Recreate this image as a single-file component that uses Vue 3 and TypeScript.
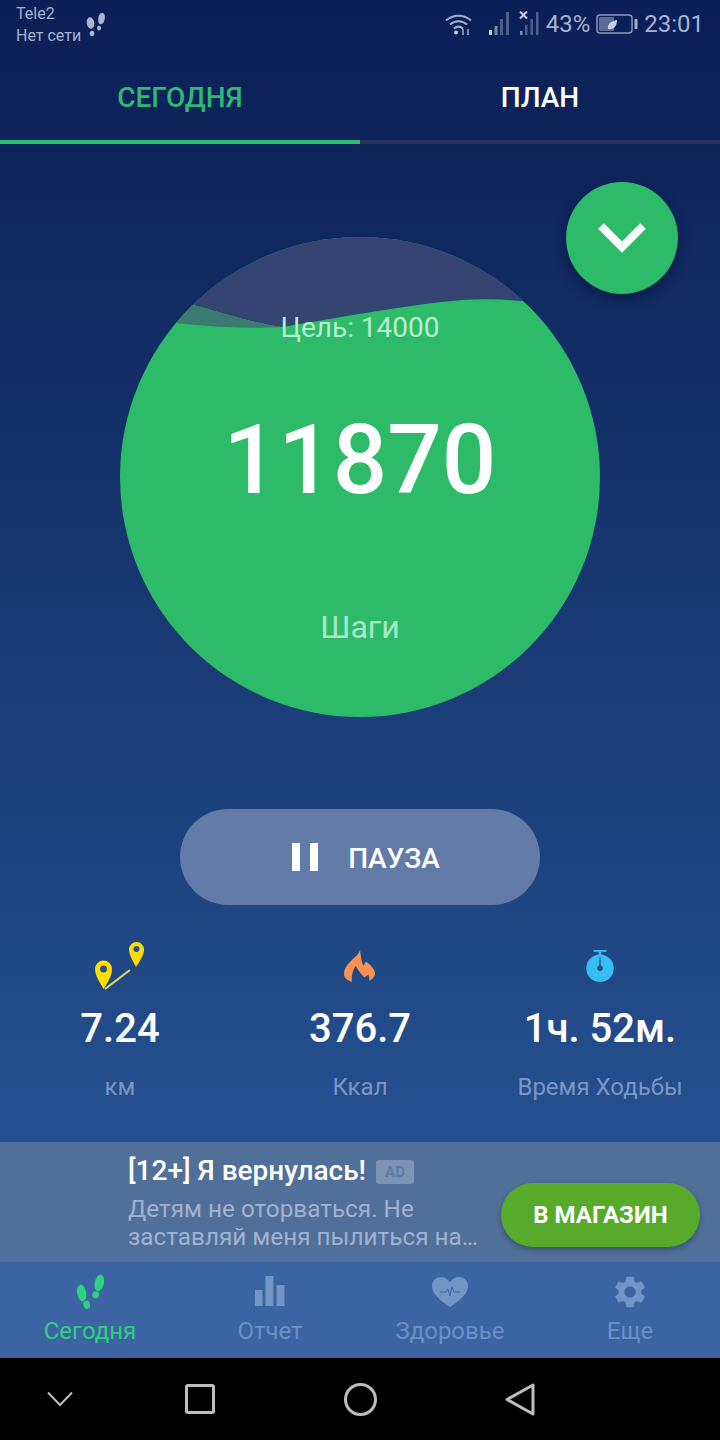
<script setup lang="ts">
interface Stat { value: string; label: string; icon: string }
const stats: Stat[] = [
  { value: '7.24', label: 'км', icon: 'route' },
  { value: '376.7', label: 'Ккал', icon: 'fire' },
  { value: '1ч. 52м.', label: 'Время Ходьбы', icon: 'timer' },
]
const navItems = [
  { label: 'Сегодня', icon: 'steps', active: true },
  { label: 'Отчет', icon: 'bars', active: false },
  { label: 'Здоровье', icon: 'heart', active: false },
  { label: 'Еще', icon: 'gear', active: false },
]
</script>

<template>
  <div class="screen">
    <div class="gradient">
      <header class="status">
        <div class="carrier">
          <div>Tele2</div>
          <div>Нет сети</div>
        </div>
        <svg class="st-steps" width="22" height="26" viewBox="0 0 22 26" fill="#a9b5cd">
          <ellipse cx="5.500" cy="11" rx="3.800" ry="5.800" transform="rotate(-10 5.500 11)" />
          <ellipse cx="7" cy="21.500" rx="2.300" ry="2.800" />
          <ellipse cx="16.500" cy="6.500" rx="3.300" ry="5.800" transform="rotate(10 16.500 6.500)" />
          <ellipse cx="14" cy="16" rx="2" ry="2.500" />
        </svg>
        <div class="st-right">
          <svg width="30" height="24" viewBox="0 0 30 24" fill="none" stroke="#a3b0ca" stroke-width="2">
            <path d="M2 8.500C9 2 20 2 27 8.500" />
            <path d="M6 12.500C11 8 18 8 23 12.500" />
            <path d="M10 16.500C13 14 16 14 19 16.500" />
            <circle cx="12" cy="20.500" r="2" fill="#c4cddf" stroke="none" />
            <path d="M19 23v-6M24 17v6" stroke-width="1.500" />
          </svg>
          <svg class="sig1" width="24" height="24" viewBox="0 0 24 24">
            <rect x="1" y="19" width="3" height="5" fill="#c4cddf" />
            <rect x="6.500" y="15" width="3" height="9" fill="#7f8dac" />
            <rect x="12" y="8" width="3" height="16" fill="#4c5f88" />
            <rect x="18" y="1" width="3" height="23" fill="#4c5f88" />
          </svg>
          <svg class="sig2" width="24" height="24" viewBox="0 0 24 24">
            <path d="M1 0.500l7 7M8 0.500l-7 7" stroke="#c4cddf" stroke-width="2" />
            <rect x="1" y="20" width="2.500" height="4" fill="#7f8dac" />
            <rect x="6" y="14" width="2.500" height="10" fill="#4c5f88" />
            <rect x="11.500" y="8" width="2.500" height="16" fill="#4c5f88" />
            <rect x="17" y="1" width="2.500" height="23" fill="#4c5f88" />
          </svg>
          <span class="pct">43%</span>
          <svg class="batt" width="42" height="22" viewBox="0 0 42 22">
            <rect x="1" y="2" width="35" height="18" rx="3" fill="none" stroke="#8b99b8" stroke-width="1.500" />
            <rect x="3" y="4" width="15" height="14" rx="1" fill="#5a6c94" />
            <path d="M12 16c-1-5 3-8 9-9 0 6-3 10-9 9z" fill="#c8d0e0" />
            <rect x="38.500" y="6" width="3" height="10" rx="1" fill="#a3b0ca" />
          </svg>
          <span class="time">23:01</span>
        </div>
      </header>

      <nav class="tabs">
        <div class="tab tab-on">СЕГОДНЯ</div>
        <div class="tab">ПЛАН</div>
      </nav>
      <div class="track"><div class="track-fill"></div></div>

      <main class="main">
        <div class="stage">
          <div class="circle">
            <svg class="wave" viewBox="0 0 480 480" width="480" height="480">
              <rect width="480" height="480" fill="#2ebb69" />
              <path d="M0 0H480V66L400 64C370 61 345 62 321 65C270 71 215 81 163 90C130 86 100 75 73 68L0 50Z" fill="#32446f" />
              <path d="M73 68C100 75 130 86 163 90C130 92 90 90 56 86L40 80Z" fill="#3a7a70" />
            </svg>
            <div class="goal">Цель: 14000</div>
            <div class="count">11870</div>
            <div class="unit">Шаги</div>
          </div>
          <div class="fab">
            <svg width="48" height="30" viewBox="0 0 48 30" fill="none" stroke="#fff" stroke-width="8">
              <path d="M3 3L24 24L45 3" />
            </svg>
          </div>
        </div>

        <div class="pause">
          <div class="pause-inner">
            <svg class="pause-ic" width="26" height="28" viewBox="0 0 26 28" fill="#fff">
              <rect x="0" y="0" width="8" height="28" />
              <rect x="18" y="0" width="8" height="28" />
            </svg>
            <span class="pause-txt">ПАУЗА</span>
          </div>
        </div>

        <section class="stats">
          <div v-for="s in stats" :key="s.label" class="stat">
            <div class="stat-ic">
              <svg v-if="s.icon === 'route'" width="52" height="50" viewBox="0 0 52 50">
                <path d="M9.500 48C6 41 1 35 1 28a8.500 8.500 0 0 1 17 0c0 7-4 13-8.500 20z" fill="#ffdd00" />
                <circle cx="9.500" cy="28" r="3.500" fill="#27508c" />
                <path d="M42 26C39 20 35 14 35 8.500a7.500 7.500 0 0 1 15 0C50 14 46 20 42 26z" fill="#ffdd00" />
                <circle cx="42.500" cy="8" r="3" fill="#27508c" />
                <path d="M11 48L36 29" stroke="#e7db58" stroke-width="2" />
              </svg>
              <svg v-else-if="s.icon === 'fire'" width="32" height="33" viewBox="0 0 32 33">
                <path d="M16 0C17 5 17 11 19.300 15.700L22 11.300C26 15 31 19 31 23C31 27 28 29 25.300 31C25.500 28 25 26 24.300 24.700L20.300 27.300C17 24 14 20 11.700 15.700C9 20 7 26 8 32C3 30 0 28 0 24C0 18 4 14 8 10C11 7 15 4 16 0Z" fill="#f79255" />
              </svg>
              <svg v-else width="30" height="33" viewBox="0 0 30 36">
                <rect x="8" y="0" width="14" height="2" fill="#35bdf4" />
                <rect x="13.500" y="2" width="3" height="4" fill="#35bdf4" />
                <circle cx="15" cy="20" r="15" fill="#35bdf4" />
                <circle cx="15" cy="20" r="3" fill="#1f4b86" />
                <rect x="14.300" y="8" width="1.400" height="11" fill="#1f4b86" />
              </svg>
            </div>
            <div class="stat-val">{{ s.value }}</div>
            <div class="stat-lbl">{{ s.label }}</div>
          </div>
        </section>
      </main>
    </div>

    <aside class="ad">
      <div class="ad-text">
        <div class="ad-title">[12+] Я вернулась!<span class="ad-tag">AD</span></div>
        <div class="ad-sub">Детям не оторваться. Не<br />заставляй меня пылиться на…</div>
      </div>
      <div class="ad-btn">В МАГАЗИН</div>
    </aside>

    <nav class="bottom">
      <div v-for="n in navItems" :key="n.label" class="nav-item" :class="{ on: n.active }">
        <svg v-if="n.icon === 'steps'" width="30" height="38" viewBox="0 0 30 38" fill="#2fd27c">
          <ellipse cx="6.700" cy="20" rx="4.500" ry="8.500" transform="rotate(-10 6.700 20)" />
          <ellipse cx="11.700" cy="31.700" rx="3.300" ry="4.200" transform="rotate(-15 11.700 31.700)" />
          <ellipse cx="24.300" cy="10" rx="4.600" ry="8.500" transform="rotate(12 24.300 10)" />
          <ellipse cx="20.700" cy="21.700" rx="3.300" ry="3.500" />
        </svg>
        <svg v-else-if="n.icon === 'bars'" width="30" height="38" viewBox="0 -3 30 38" fill="#7294c6">
          <rect x="0" y="14" width="7.500" height="16" />
          <rect x="10.500" y="0" width="8" height="30" />
          <rect x="21.500" y="9" width="8" height="21" />
        </svg>
        <svg v-else-if="n.icon === 'heart'" width="36" height="38" viewBox="0 -4 36 38">
          <path d="M18 30C8 23 0 17 0 9 0 3 5 0 9 0c4 0 7 2 9 5 2-3 5-5 9-5 4 0 9 3 9 9 0 8-8 14-18 21z" fill="#7294c6" />
          <path d="M8 15h6l2-3 2 7 2-9 2 5h6" fill="none" stroke="#3d65a3" stroke-width="1" />
        </svg>
        <svg v-else width="30" height="38" viewBox="2.500 0 19 24" fill="#7294c6">
          <path d="M19.140 12.940c.040-.300.060-.610.060-.940 0-.320-.020-.640-.070-.940l2.030-1.580a.490.490 0 0 0 .120-.610l-1.920-3.320a.490.490 0 0 0-.590-.220l-2.390.960c-.500-.380-1.030-.700-1.620-.940l-.360-2.540a.480.480 0 0 0-.480-.410h-3.840a.470.470 0 0 0-.470.410l-.360 2.540c-.590.240-1.130.570-1.620.940l-2.390-.960a.480.480 0 0 0-.590.220L2.740 8.870a.470.470 0 0 0 .120.610l2.030 1.580c-.050.300-.090.630-.090.940s.020.640.070.940l-2.030 1.580a.490.490 0 0 0-.120.610l1.920 3.320c.120.220.370.290.590.220l2.390-.960c.500.380 1.030.700 1.620.940l.360 2.540c.050.240.240.410.480.410h3.840c.240 0 .440-.170.470-.410l.360-2.540c.590-.240 1.130-.560 1.620-.940l2.390.960c.220.080.470 0 .590-.220l1.920-3.320a.470.470 0 0 0-.120-.610l-2.010-1.580zM12 15.600A3.600 3.600 0 1 1 12 8.400a3.600 3.600 0 0 1 0 7.200z" />
        </svg>
        <span>{{ n.label }}</span>
      </div>
    </nav>

    <footer class="sysbar">
      <svg width="26" height="16" viewBox="0 0 26 16" fill="none" stroke="#bdbdbd" stroke-width="2">
        <path d="M1 1.500L13 14L25 1.500" />
      </svg>
      <svg width="30" height="30" viewBox="0 0 30 30" fill="none" stroke="#bdbdbd" stroke-width="3">
        <rect x="1.500" y="1.500" width="27" height="27" rx="1.500" />
      </svg>
      <svg width="33" height="33" viewBox="0 0 33 33" fill="none" stroke="#bdbdbd" stroke-width="3">
        <circle cx="16.500" cy="16.500" r="15" />
      </svg>
      <svg width="30" height="33" viewBox="0 0 30 33" fill="none" stroke="#bdbdbd" stroke-width="3" stroke-linejoin="round">
        <path d="M28 2V31L2 16.500Z" />
      </svg>
    </footer>
  </div>
</template>

<style>
html, body { margin: 0; padding: 0; background: #000; }
</style>

<style scoped>
.screen {
  width: 720px;
  height: 1440px;
  display: flex;
  flex-direction: column;
  overflow: hidden;
  font-family: Roboto, "Noto Sans", sans-serif;
}
.gradient {
  height: 1142px;
  flex: none;
  background: linear-gradient(180deg, #0a1f57 0%, #0e255c 15%, #25508f 100%);
}
.status {
  height: 48px;
  display: flex;
  align-items: flex-start;
  padding: 0 16px;
  color: #a7b3cc;
  box-sizing: border-box;
}
.carrier {
  font-size: 16px;
  line-height: 22px;
  padding-top: 3px;
}
.st-steps { margin: 12px 0 0 4px; }
.st-right {
  margin-left: auto;
  display: flex;
  align-items: center;
  height: 48px;
}
.sig1 { margin-left: 14px; margin-top: -2px; }
.sig2 { margin-left: 7px; margin-top: -2px; }
.pct { font-size: 24px; color: #a7b3cc; margin-left: 3px; }
.batt { margin-left: 6px; }
.time { font-size: 24px; color: #a7b3cc; margin-left: 6px; }
.tabs { display: flex; height: 92px; }
.tab {
  flex: 1;
  display: flex;
  align-items: center;
  justify-content: center;
  color: #fff;
  font-size: 28px;
  font-weight: 500;
  padding-top: 6px;
  box-sizing: border-box;
}
.tab-on { color: #2eb872; }
.track { height: 4px; background: #22365f; }
.track-fill { width: 360px; height: 4px; background: #2ebb6d; }
.main { display: flex; flex-direction: column; align-items: center; }
.stage {
  position: relative;
  width: 720px;
  padding-top: 93px;
  display: flex;
  justify-content: center;
}
.circle {
  position: relative;
  width: 480px;
  height: 480px;
  border-radius: 50%;
  overflow: hidden;
  display: flex;
  flex-direction: column;
  align-items: center;
  color: #fff;
}
.wave { position: absolute; left: 0; top: 0; }
.goal {
  position: relative;
  margin-top: 73px;
  font-size: 28px;
  line-height: 36px;
  color: #b5f0cf;
}
.count {
  position: relative;
  margin-top: 59px;
  font-size: 96px;
  line-height: 110px;
  font-weight: 500;
}
.unit {
  position: relative;
  margin-top: 92px;
  font-size: 32px;
  line-height: 40px;
  color: #a9e8c6;
}
.fab {
  position: absolute;
  left: 566px;
  top: 38px;
  width: 112px;
  height: 112px;
  border-radius: 50%;
  background: #2ebb69;
  box-shadow: 0 5px 12px rgba(5, 16, 50, 0.55);
  display: flex;
  align-items: center;
  justify-content: center;
}
.pause {
  margin-top: 92px;
  width: 360px;
  height: 96px;
  border-radius: 48px;
  background: #627ca7;
  display: flex;
  align-items: center;
  justify-content: center;
}
.pause-inner {
  display: flex;
  align-items: center;
  gap: 30px;
  color: #fff;
  font-size: 28px;
  font-weight: 500;
  padding-left: 12px;
}
.pause-txt { padding-top: 3px; }
.stats {
  width: 720px;
  display: flex;
  justify-content: space-between;
  margin-top: 35px;
}
.stat {
  width: 240px;
  display: flex;
  flex-direction: column;
  align-items: center;
}
.stat-ic {
  height: 52px;
  display: flex;
  align-items: center;
  justify-content: center;
}
.stat-val {
  color: #fff;
  font-size: 40px;
  font-weight: 500;
  line-height: 48px;
  margin-top: 13px;
}
.stat-lbl {
  margin-top: 18px;
  color: #7d96c3;
  font-size: 24px;
  line-height: 32px;
  white-space: nowrap;
}
.ad {
  height: 120px;
  flex: none;
  background: #506f99;
  display: flex;
  align-items: flex-start;
  padding: 0 20px 0 128px;
  box-sizing: border-box;
}
.ad-text { width: 352px; padding-top: 12px; }
.ad-title {
  color: #fff;
  font-size: 28px;
  font-weight: 500;
  line-height: 34px;
  white-space: nowrap;
}
.ad-tag {
  display: inline-block;
  vertical-align: 3px;
  width: 38px;
  height: 24px;
  line-height: 24px;
  border-radius: 3px;
  background: #7b94b1;
  color: #5b7ba6;
  font-size: 15px;
  font-weight: 700;
  text-align: center;
  margin-left: 10px;
}
.ad-sub {
  color: #a0b3cf;
  font-size: 24.300px;
  line-height: 28px;
  margin-top: 7px;
  white-space: nowrap;
}
.ad-btn {
  margin-left: auto;
  margin-top: 41px;
  width: 199px;
  height: 64px;
  border-radius: 32px;
  background: #58ab2a;
  box-shadow: 0 3px 5px rgba(20, 40, 60, 0.4);
  color: #fff;
  font-size: 24px;
  font-weight: 700;
  display: flex;
  align-items: center;
  justify-content: center;
  flex: none;
}
.bottom {
  height: 96px;
  flex: none;
  background: #3c64a3;
  display: flex;
}
.nav-item {
  width: 180px;
  height: 96px;
  display: flex;
  flex-direction: column;
  align-items: center;
  color: #6e8fc3;
  font-size: 24px;
  line-height: 28px;
  padding-top: 11px;
  box-sizing: border-box;
}
.nav-item span { margin-top: 6px; }
.nav-item.on { color: #2fcf7f; }
.sysbar {
  flex: 1;
  background: #000;
  display: grid;
  grid-template-columns: 120px 160px 160px 160px;
  justify-items: center;
  align-items: center;
}
</style>
